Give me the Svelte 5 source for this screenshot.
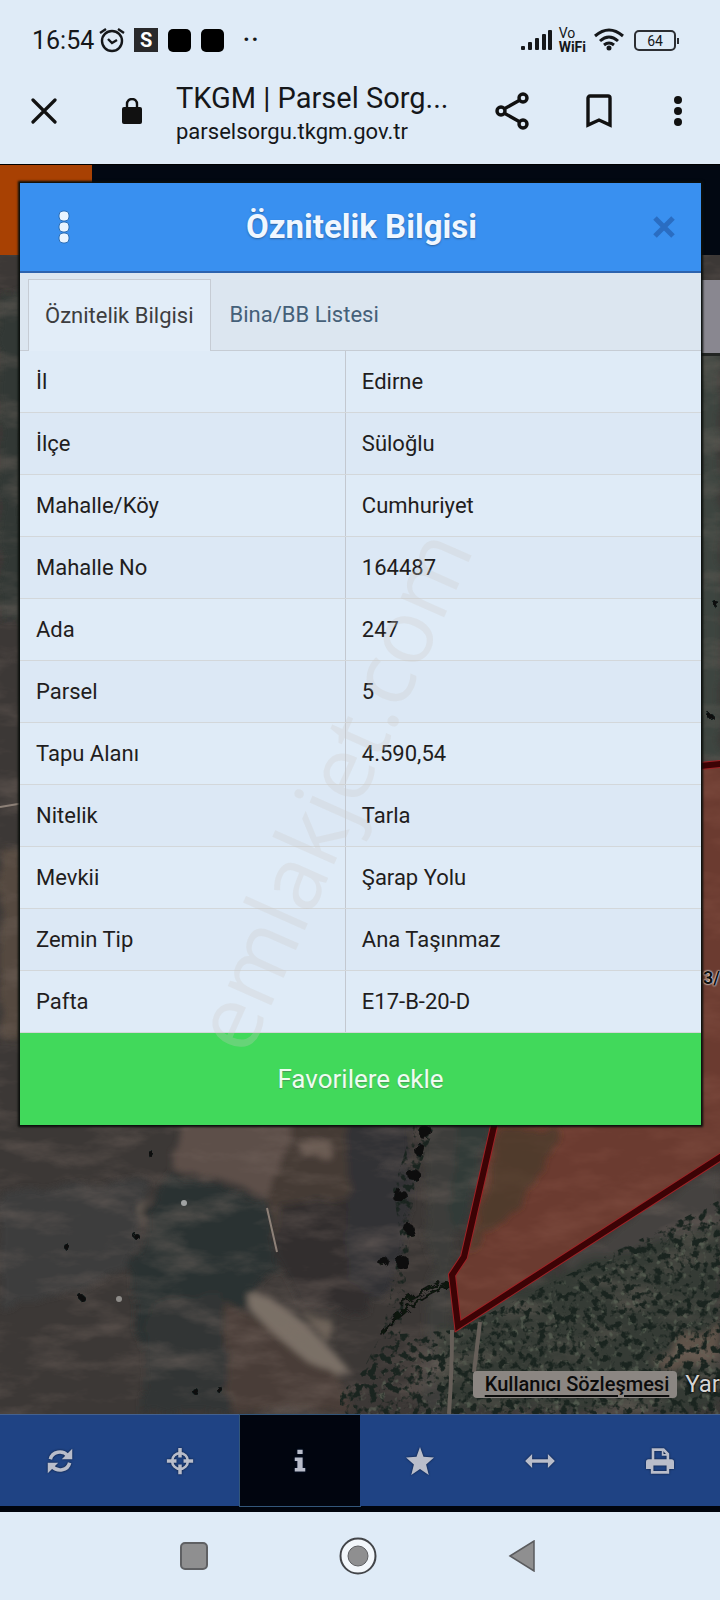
<script>
  const rows = [
    { label: 'İl', value: 'Edirne' },
    { label: 'İlçe', value: 'Süloğlu' },
    { label: 'Mahalle/Köy', value: 'Cumhuriyet' },
    { label: 'Mahalle No', value: '164487' },
    { label: 'Ada', value: '247' },
    { label: 'Parsel', value: '5' },
    { label: 'Tapu Alanı', value: '4.590,54' },
    { label: 'Nitelik', value: 'Tarla' },
    { label: 'Mevkii', value: 'Şarap Yolu' },
    { label: 'Zemin Tip', value: 'Ana Taşınmaz' },
    { label: 'Pafta', value: 'E17-B-20-D' }
  ];

  const tabs = ['Öznitelik Bilgisi', 'Bina/BB Listesi'];
  const tools = ['refresh', 'locate', 'info', 'favorites', 'measure', 'print'];

  let activeTab = $state(0);
  let activeTool = $state('info');
</script>

<div class="phone">
  <div class="status-bar">
    <span class="clock">16:54</span>
    <svg class="alarm" width="26" height="26" viewBox="0 0 26 26" fill="none" stroke="#15171a" stroke-width="2.4">
      <circle cx="13" cy="14" r="10" />
      <path d="M9 12l4 4 5-3" />
      <path d="M1 6l6-4M25 6l-6-4" />
    </svg>
    <span class="s-badge">S</span>
    <span class="blob"></span>
    <span class="blob"></span>
    <span class="more">··</span>
    <svg class="signal" width="33" height="22" viewBox="0 0 33 22" fill="#15171a">
      <rect x="1" y="17" width="4" height="4" rx="1" />
      <rect x="8" y="13" width="4" height="8" rx="1" />
      <rect x="15" y="9" width="4" height="12" rx="1" />
      <rect x="22" y="5" width="4" height="16" rx="1" />
      <rect x="28" y="1" width="4" height="20" rx="1" />
    </svg>
    <span class="vowifi"><span>Vo</span><b>WiFi</b></span>
    <svg class="wifi" width="30" height="24" viewBox="0 0 30 24" fill="none" stroke="#15171a" stroke-width="3">
      <path d="M1 8Q15-4 29 8" />
      <path d="M6 13Q15 5 24 13" />
      <path d="M10 17Q15 13 20 17" />
      <circle cx="15" cy="20" r="1.5" fill="#15171a" stroke-width="2" />
    </svg>
    <span class="battery">64</span>
  </div>

  <div class="browser-bar">
    <button class="plain" aria-label="Kapat">
      <svg width="26" height="26" viewBox="0 0 26 26" stroke="#111" stroke-width="3.2" stroke-linecap="round">
        <path d="M2 2l22 22M24 2L2 24" />
      </svg>
    </button>
    <svg class="lock" width="20" height="26" viewBox="0 0 20 26">
      <path d="M5 11V6a5 5 0 0 1 10 0v5" fill="none" stroke="#111" stroke-width="2.4" />
      <rect x="0" y="9" width="20" height="17" rx="2" fill="#111" />
    </svg>
    <div class="address">
      <div class="page-title">TKGM | Parsel Sorg...</div>
      <div class="page-url">parselsorgu.tkgm.gov.tr</div>
    </div>
    <button class="plain" aria-label="Paylaş">
      <svg width="34" height="38" viewBox="0 0 34 38" fill="none" stroke="#111" stroke-width="3.4">
        <path d="M9 17l16-9M9 21l16 9" />
        <circle cx="6" cy="19" r="4" />
        <circle cx="28" cy="6" r="4" />
        <circle cx="28" cy="32" r="4" />
      </svg>
    </button>
    <button class="plain" aria-label="Yer işareti">
      <svg width="26" height="34" viewBox="0 0 26 34" fill="none" stroke="#111" stroke-width="3.4">
        <path d="M2 4a2 2 0 0 1 2-2h18a2 2 0 0 1 2 2v27l-11-5-11 5z" />
      </svg>
    </button>
    <button class="plain" aria-label="Menü">
      <svg width="8" height="30" viewBox="0 0 8 30" fill="#111">
        <circle cx="4" cy="4" r="4" />
        <circle cx="4" cy="15" r="4" />
        <circle cx="4" cy="26" r="4" />
      </svg>
    </button>
  </div>

  <main class="site">
    <div class="site-header"><span class="brand"></span></div>

    <div class="map">
      <svg class="satellite" viewBox="0 255 720 1159" preserveAspectRatio="xMidYMax slice" aria-hidden="true">
        <defs>
          <filter id="soft" x="-20%" y="-20%" width="140%" height="140%">
            <feTurbulence type="fractalNoise" baseFrequency="0.04" numOctaves="3" seed="4" result="n" />
            <feDisplacementMap in="SourceGraphic" in2="n" scale="16" />
            <feGaussianBlur stdDeviation="3" />
          </filter>
          <filter id="rough" x="-20%" y="-20%" width="140%" height="140%">
            <feTurbulence type="fractalNoise" baseFrequency="0.1" numOctaves="2" seed="9" result="n" />
            <feDisplacementMap in="SourceGraphic" in2="n" scale="10" />
          </filter>
          <filter id="grain" x="0" y="0" width="100%" height="100%" color-interpolation-filters="sRGB">
            <feTurbulence type="fractalNoise" baseFrequency="0.015 0.04" numOctaves="5" seed="7" />
            <feColorMatrix values="0 0 0 0 0.5  0 0 0 0 0.44  0 0 0 0 0.41  2 0 0 0 -0.9" />
          </filter>
          <filter id="bushes" x="0" y="0" width="100%" height="100%" color-interpolation-filters="sRGB">
            <feTurbulence type="fractalNoise" baseFrequency="0.13" numOctaves="3" seed="21" result="t" />
            <feColorMatrix values="0 0 0 0 0.1  0 0 0 0 0.14  0 0 0 0 0.12  0 6 0 0 -3" />
            <feComposite in2="SourceGraphic" operator="in" />
          </filter>
          <filter id="leaves" x="0" y="0" width="100%" height="100%" color-interpolation-filters="sRGB">
            <feTurbulence type="fractalNoise" baseFrequency="0.15" numOctaves="2" seed="33" result="t" />
            <feColorMatrix values="0 0 0 0 0.38  0 0 0 0 0.42  0 0 0 0 0.36  0 5 0 0 -2.9" />
            <feComposite in2="SourceGraphic" operator="in" />
          </filter>
        </defs>

        <rect y="255" width="720" height="1159" fill="#3c3836" />
        <g filter="url(#soft)">
          <path d="M0 290h24v330H0z" fill="#303735" />
          <path d="M0 850h24v190H0z" fill="#54493f" />
          <path d="M700 350h20v410h-20z" fill="#3d4441" />
          <path d="M0 1190l150-10-20 90-130 40z" fill="#3d3c3c" />
          <path d="M180 1120h112l-24 80-30-15-66-16z" fill="#5d504a" />
          <path d="M268 1200l24-80h60l-8 160-70-40z" fill="#443a36" />
          <path d="M168 1172l100 30 8 68-60 70-74 10-12-80z" fill="#2b3131" />
          <path d="M150 1300l70-10 10 124h-90z" fill="#333634" />
          <path d="M280 1205l80-10 10 120-70-10-25-50z" fill="#322e2d" />
          <path d="M348 1120h64l-4 120-30 60-30-20z" fill="#313335" />
          <path d="M422 1120h70l-40 140-4 150h-28l10-130z" fill="#3e3e3b" />
          <path d="M460 1120h30l-30 110-12-10z" fill="#313a38" />
          <path d="M222 1300l110 60 20 50H230z" fill="#483e38" />
          <path d="M245 1292q40 0 105 80-30 10-100-62z" fill="#7a7066" />
          <path d="M300 1310l36 14-6 22z" fill="#6a6057" />
          <path d="M296 1140h32l6 20-30-4z" fill="#6b5b52" />
          <path d="M142 1210l10-12-10 30z" fill="#75695f" />
          <path d="M440 1330l280-140v220H440z" fill="#343a35" />
          <path d="M650 1360l70-40v40l-50 10z" fill="#5f524a" />
          <path d="M560 1260l160-90v50l-150 50z" fill="#454240" />
        </g>
        <rect y="255" width="720" height="1159" filter="url(#grain)" opacity="0.5" />
        <path d="M455 1330l265-120v204H360v-30z" filter="url(#leaves)" opacity="0.6" />
        <path d="M455 1330l265-130v214H340v-20l60-60z" filter="url(#bushes)" />
        <path d="M415 1120h22l-22 60-12 130-10 80h-40l30-60 18-90-8-50z" filter="url(#bushes)" />
        <g fill="none" stroke="#0f1210" stroke-width="3" filter="url(#rough)">
          <path d="M452 1284q-36 10-72 50M440 1282l-40 22" />
        </g>
        <path d="M452 1330q0 40-3 84M480 1322l-6 50" fill="none" stroke="#665f59" stroke-width="4" />
        <path d="M267 1208l10 44M0 807l24-4" fill="none" stroke="#8d8178" stroke-width="2" />
        <g fill="#0a0c0b" filter="url(#rough)">
          <circle cx="66" cy="1246" r="3" /><circle cx="136" cy="1236" r="3" />
          <circle cx="152" cy="1155" r="3" /><circle cx="82" cy="1298" r="3" />
          <circle cx="194" cy="1390" r="3" /><circle cx="220" cy="1390" r="3" />
          <circle cx="425" cy="1132" r="7" /><circle cx="420" cy="1150" r="6" />
          <circle cx="414" cy="1175" r="6" />
          <circle cx="410" cy="1230" r="5" /><circle cx="400" cy="1196" r="7" />
          <circle cx="402" cy="1262" r="7" /><circle cx="384" cy="1262" r="5" />
          <circle cx="716" cy="604" r="3" /><circle cx="710" cy="716" r="3" />
        </g>
        <circle cx="184" cy="1203" r="3" fill="#a0a3a3" />
        <circle cx="119" cy="1299" r="3" fill="#8e8c89" />

        <path d="M690 767l40-4v388L458 1326l-6-51 12-18 36-157z" fill="#97402c" fill-opacity="0.52" />
        <path d="M498 1127h60q-10 60-75 110l-14 20z" fill="#3c382b" fill-opacity="0.55" filter="url(#soft)" />
        <path d="M690 767l40-4v388L458 1326l-6-51 12-18 36-157" fill="none" stroke="#a02226" stroke-width="8" />
        <path d="M690 767l40-4v388L458 1326l-6-51 12-18 36-157" fill="none" stroke="#3c0305" stroke-width="6" />
      </svg>
      <span class="layer-box"></span>
      <span class="parcel-no">3/</span>
      <div class="map-footer">
        <a class="terms" href="#sozlesme">Kullanıcı Sözleşmesi</a>
        <span class="help">Yar</span>
      </div>
    </div>

    <nav class="toolbar">
      {#each tools as tool}
        <button class:active={activeTool === tool} aria-label={tool} onclick={() => (activeTool = tool)}>
          <svg width="32" height="32" viewBox="0 0 32 32" fill="#b9bdca">
            {#if tool === 'refresh'}
              <g fill="none" stroke="#b9bdca" stroke-width="4">
                <path d="M5 14c2-9 14-11 20-4" />
                <path d="M27 18c-2 9-14 11-20 4" />
              </g>
              <path d="M30 2v12H18z" />
              <path d="M2 30V18h12z" />
            {:else if tool === 'locate'}
              <circle cx="16" cy="16" r="9" fill="none" stroke="#b9bdca" stroke-width="3" />
              <path d="M14 1h4v11h-4zM14 20h4v11h-4zM1 14h11v4H1zM20 14h11v4H20z" />
            {:else if tool === 'info'}
              <path d="M13 3h6v5h-6zM10 12h9v12h3v4H10v-4h3v-8h-3z" />
            {:else if tool === 'favorites'}
              <path d="M16 0l4 11 12 1-9 8 3 12-10-7-10 7 3-12-9-8 12-1z" />
            {:else if tool === 'measure'}
              <path d="M-1 16l8-8v6h18V8l8 8-8 8v-6H7v6z" />
            {:else}
              <path d="M8 15V3h12l5 5v7" fill="none" stroke="#b9bdca" stroke-width="3" />
              <path d="M19 3v6h6" fill="none" stroke="#b9bdca" stroke-width="2" />
              <path d="M3 14h26q3 0 3 3v8h-6v-4H6v4H0v-8q0-3 3-3z" />
              <path d="M7 19v10h18V19" fill="none" stroke="#b9bdca" stroke-width="3" />
            {/if}
          </svg>
        </button>
      {/each}
    </nav>

    <section class="modal">
      <header class="modal-header">
        <button class="plain" aria-label="Seçenekler">
          <svg width="12" height="34" viewBox="0 0 12 34" fill="#e9f4ff" stroke="#2b6fb8" stroke-width="1">
            <rect x="1" y="1" width="10" height="10" rx="4" />
            <rect x="1" y="12" width="10" height="10" rx="4" />
            <rect x="1" y="23" width="10" height="10" rx="4" />
          </svg>
        </button>
        <h1>Öznitelik Bilgisi</h1>
        <button class="plain" aria-label="Kapat">
          <svg width="22" height="22" viewBox="0 0 22 22" stroke="#2a6dc2" stroke-width="5">
            <path d="M2 2l18 18M20 2L2 20" />
          </svg>
        </button>
      </header>

      <div class="tabs" role="tablist">
        {#each tabs as tab, i}
          <button role="tab" aria-selected={activeTab === i} class:selected={activeTab === i} onclick={() => (activeTab = i)}>{tab}</button>
        {/each}
      </div>

      <table>
        <tbody>
          {#each rows as row}
            <tr>
              <th scope="row">{row.label}</th>
              <td>{row.value}</td>
            </tr>
          {/each}
        </tbody>
      </table>

      <button class="favorite">Favorilere ekle</button>

      <svg class="watermark" width="300" height="560" viewBox="200 520 300 560" aria-hidden="true">
        <text transform="translate(248 1058) rotate(-66)">emlakjet.com</text>
      </svg>
    </section>
  </main>

  <div class="nav-bar">
    <button class="plain" aria-label="Son uygulamalar">
      <svg width="28" height="28" viewBox="0 0 28 28">
        <rect x="1" y="1" width="26" height="26" rx="4" fill="#8f8f90" stroke="#5f6063" stroke-width="2" />
      </svg>
    </button>
    <button class="plain" aria-label="Ana ekran">
      <svg width="38" height="38" viewBox="0 0 38 38">
        <circle cx="19" cy="19" r="17.5" fill="#f3f7fb" stroke="#434549" stroke-width="2" />
        <circle cx="19" cy="19" r="10" fill="#8f8f90" stroke="#5f6063" />
      </svg>
    </button>
    <button class="plain" aria-label="Geri">
      <svg width="28" height="32" viewBox="0 0 28 32">
        <path d="M2 16L26 1v30z" fill="#8f8f90" stroke="#5a5b5e" stroke-width="1.5" />
      </svg>
    </button>
  </div>
</div>

<style>
  :global(body) {
    margin: 0;
    background: #dfebf7;
  }

  .phone {
    display: flex;
    flex-direction: column;
    min-height: 100vh;
    background: #dfebf7;
    font-family: Roboto, 'Noto Sans', sans-serif;
    color: #15171a;
  }

  button {
    font-family: inherit;
    border: none;
    cursor: pointer;
  }

  .plain {
    display: flex;
    padding: 0;
    background: none;
  }

  .status-bar {
    display: flex;
    align-items: center;
    height: 42px;
    padding: 19px 44px 0 32px;
  }

  .clock {
    font-size: 25px;
  }

  .alarm {
    margin-left: 5px;
  }

  .s-badge {
    width: 24px;
    height: 24px;
    margin-left: 9px;
    background: #29292b;
    color: #fff;
    font-size: 20px;
    font-weight: 700;
    line-height: 24px;
    text-align: center;
  }

  .blob {
    width: 23px;
    height: 23px;
    margin-left: 10px;
    border-radius: 5px;
    background: #000;
  }

  .more {
    margin-left: 18px;
    font-size: 32px;
    line-height: 24px;
  }

  .signal {
    margin-left: auto;
  }

  .vowifi {
    display: flex;
    flex-direction: column;
    margin-left: 6px;
    font-size: 14px;
    line-height: 14px;
  }

  .wifi {
    margin-left: 8px;
  }

  .battery {
    position: relative;
    width: 38px;
    height: 17px;
    margin-left: 10px;
    border: 2px solid #2c2e33;
    border-radius: 5px;
    font-size: 14px;
    line-height: 18px;
    text-align: center;
  }

  .battery::after {
    content: '';
    position: absolute;
    top: 6px;
    right: -5px;
    width: 2px;
    height: 6px;
    background: #2c2e33;
  }

  .browser-bar {
    display: flex;
    align-items: center;
    height: 100px;
    padding: 0 38px 3px 31px;
  }

  .lock {
    margin-left: 65px;
  }

  .address {
    flex: 1;
    margin-left: 34px;
    padding-top: 8px;
    white-space: nowrap;
  }

  .page-title {
    font-size: 29px;
    line-height: 34px;
  }

  .page-url {
    font-size: 22px;
    line-height: 34px;
  }

  .address + .plain {
    margin-right: 57px;
  }

  .browser-bar .plain:last-child {
    margin-left: 62px;
  }

  .site {
    position: relative;
    display: flex;
    flex: 1;
    flex-direction: column;
    background: #00040d;
  }

  .site-header {
    display: flex;
    height: 91px;
    border-top: 1px solid #000;
    box-sizing: border-box;
    background: #020812;
  }

  .brand {
    width: 92px;
    background: #a84103;
  }

  .map {
    position: relative;
    display: flex;
    flex: 1;
    align-items: flex-end;
    justify-content: flex-end;
    overflow: hidden;
  }

  .satellite {
    position: absolute;
    inset: 0;
    width: 100%;
    height: 100%;
  }

  .layer-box {
    position: absolute;
    top: 25px;
    right: 0;
    width: 30px;
    height: 73px;
    background: #898790;
    border-bottom: 3px solid #222523;
  }

  .parcel-no {
    position: absolute;
    top: 712px;
    right: 0;
    font-size: 18px;
    font-weight: 700;
    color: #111;
    text-shadow: 0 0 2px #fff, 0 0 2px #fff;
  }

  .map-footer {
    position: relative;
    display: flex;
    align-items: center;
    gap: 8px;
    margin-bottom: 16px;
  }

  .terms {
    padding: 0 8px 0 12px;
    border-radius: 4px;
    background: #8b8682;
    color: #0b0b0b;
    font-size: 20px;
    font-weight: 500;
    line-height: 27px;
    text-underline-offset: 4px;
  }

  .help {
    color: #d4d4d4;
    font-size: 24px;
    text-shadow: 0 0 3px #000, 0 0 2px #000;
  }

  .toolbar {
    display: flex;
    height: 91px;
    border-top: 1px solid #44618f;
    border-bottom: 6px solid #00040d;
  }

  .toolbar button {
    display: flex;
    flex: 1;
    align-items: center;
    justify-content: center;
    padding: 0;
    background: #1f4384;
  }

  .toolbar button.active {
    background: #01050f;
    box-shadow: 0 0 0 1px #33567a;
  }

  .toolbar svg {
    width: 28px;
    height: 28px;
    overflow: visible;
    filter: drop-shadow(0 0 1px #0a1a38);
  }

  .modal {
    position: absolute;
    top: 19px;
    right: 19px;
    left: 20px;
    background: #dfebf7;
    box-shadow: 0 0 2px 2px #0b0f0c;
  }

  .modal-header {
    display: flex;
    align-items: center;
    justify-content: space-between;
    height: 88px;
    padding: 0 26px 0 38px;
    border-bottom: 2px solid #2d63ae;
    background: #3990f0;
  }

  h1 {
    margin: 0;
    color: #f0f7ff;
    font-size: 33px;
    font-weight: 700;
    line-height: 40px;
    text-shadow: 0 1px 2px #2a5f9c;
  }

  .tabs {
    display: flex;
    height: 71px;
    padding: 6px 0 0 8px;
    border-bottom: 1px solid #c6ccd4;
    background: #dce6f0;
  }

  .tabs button {
    padding: 0 16px;
    border: 1px solid transparent;
    background: none;
    color: #456079;
    font-size: 22px;
  }

  .tabs button.selected {
    margin-bottom: -1px;
    border-color: #c6ccd4;
    border-bottom: none;
    background: #e2edf8;
    color: #3d3d40;
    padding-bottom: 1px;
  }

  .tabs button + button {
    margin-left: 2px;
  }

  table {
    width: 100%;
    border-collapse: collapse;
    table-layout: fixed;
  }

  th,
  td {
    height: 61px;
    padding: 0 16px;
    border-bottom: 1px solid #d3d7da;
    font-size: 22px;
    font-weight: 400;
    text-align: left;
    color: #1f1d20;
  }

  th {
    width: 43%;
    border-right: 1px solid #c3c8d0;
  }

  tr:nth-child(even) {
    background: #dce8f5;
  }

  .favorite {
    display: block;
    width: 100%;
    height: 92px;
    background: #41d95b;
    color: #eefcf0;
    font-size: 26px;
    text-shadow: 0 1px 1px #4a9a58;
  }

  .watermark {
    position: absolute;
    top: 337px;
    left: 180px;
    pointer-events: none;
  }

  .watermark text {
    fill: #cbc9c7;
    fill-opacity: 0.28;
    font-family: 'Open Sans', sans-serif;
    font-size: 89px;
  }

  .nav-bar {
    display: flex;
    align-items: center;
    justify-content: center;
    gap: 131px;
    height: 88px;
    padding-right: 4px;
  }
</style>
